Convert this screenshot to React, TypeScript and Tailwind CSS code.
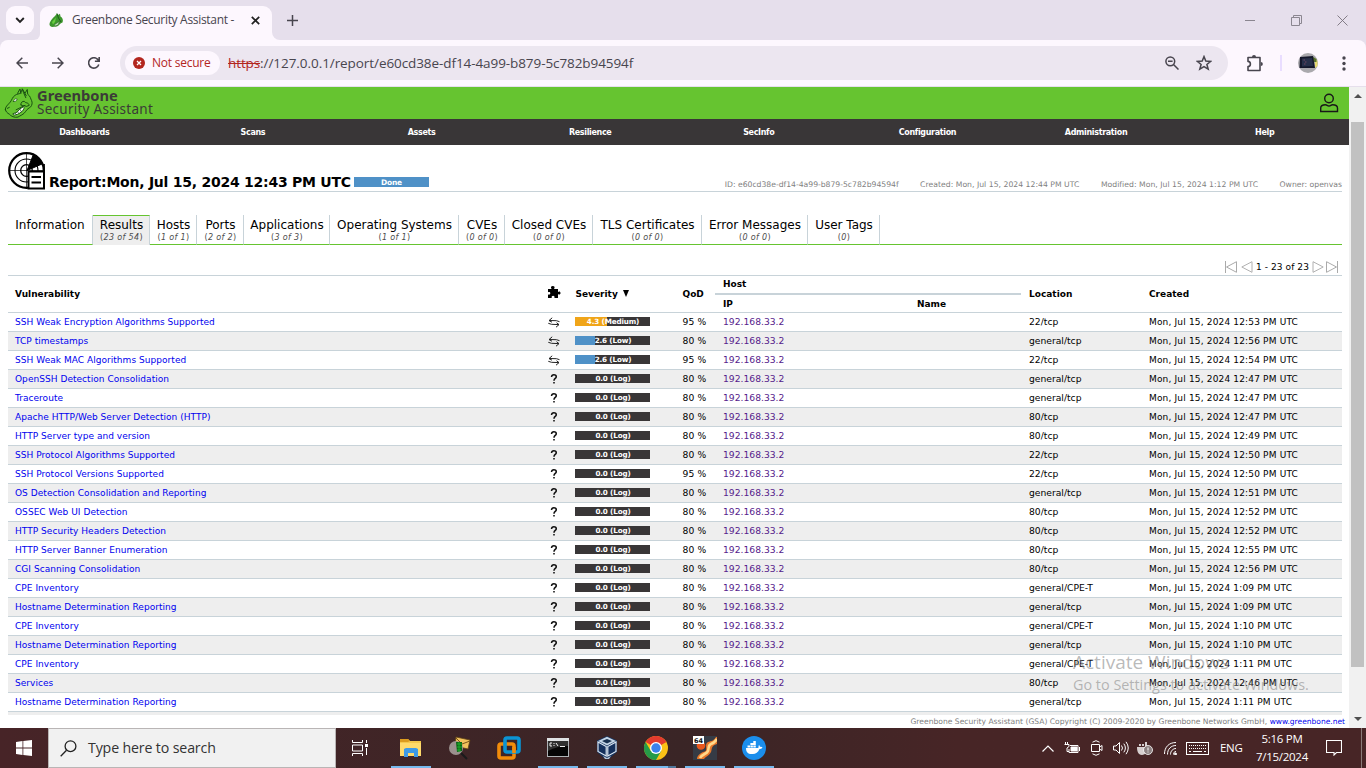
import type { ReactNode } from "react";

type Row = [name: string, score: string, qod: number, location: string, created: string];

const ROWS: Row[] = [
  ["SSH Weak Encryption Algorithms Supported", "4.3 (Medium)", 95, "22/tcp", "12:53"],
  ["TCP timestamps", "2.6 (Low)", 80, "general/tcp", "12:56"],
  ["SSH Weak MAC Algorithms Supported", "2.6 (Low)", 95, "22/tcp", "12:54"],
  ["OpenSSH Detection Consolidation", "0.0 (Log)", 80, "general/tcp", "12:47"],
  ["Traceroute", "0.0 (Log)", 80, "general/tcp", "12:47"],
  ["Apache HTTP/Web Server Detection (HTTP)", "0.0 (Log)", 80, "80/tcp", "12:47"],
  ["HTTP Server type and version", "0.0 (Log)", 80, "80/tcp", "12:49"],
  ["SSH Protocol Algorithms Supported", "0.0 (Log)", 80, "22/tcp", "12:50"],
  ["SSH Protocol Versions Supported", "0.0 (Log)", 95, "22/tcp", "12:50"],
  ["OS Detection Consolidation and Reporting", "0.0 (Log)", 80, "general/tcp", "12:51"],
  ["OSSEC Web UI Detection", "0.0 (Log)", 80, "80/tcp", "12:52"],
  ["HTTP Security Headers Detection", "0.0 (Log)", 80, "80/tcp", "12:52"],
  ["HTTP Server Banner Enumeration", "0.0 (Log)", 80, "80/tcp", "12:55"],
  ["CGI Scanning Consolidation", "0.0 (Log)", 80, "80/tcp", "12:56"],
  ["CPE Inventory", "0.0 (Log)", 80, "general/CPE-T", "1:09"],
  ["Hostname Determination Reporting", "0.0 (Log)", 80, "general/tcp", "1:09"],
  ["CPE Inventory", "0.0 (Log)", 80, "general/CPE-T", "1:10"],
  ["Hostname Determination Reporting", "0.0 (Log)", 80, "general/tcp", "1:10"],
  ["CPE Inventory", "0.0 (Log)", 80, "general/CPE-T", "1:11"],
  ["Services", "0.0 (Log)", 80, "80/tcp", "12:46"],
  ["Hostname Determination Reporting", "0.0 (Log)", 80, "general/tcp", "1:11"],
];

const MENU = ["Dashboards", "Scans", "Assets", "Resilience", "SecInfo", "Configuration", "Administration", "Help"];

const TABS: { label: string; count?: string; width: string }[] = [
  { label: "Information", width: "w-[85px]" },
  { label: "Results", count: "23 of 54", width: "w-[57px]" },
  { label: "Hosts", count: "1 of 1", width: "w-[47px]" },
  { label: "Ports", count: "2 of 2", width: "w-[47px]" },
  { label: "Applications", count: "3 of 3", width: "w-[86px]" },
  { label: "Operating Systems", count: "1 of 1", width: "w-[129px]" },
  { label: "CVEs", count: "0 of 0", width: "w-[46px]" },
  { label: "Closed CVEs", count: "0 of 0", width: "w-[88px]" },
  { label: "TLS Certificates", count: "0 of 0", width: "w-[109px]" },
  { label: "Error Messages", count: "0 of 0", width: "w-[106px]" },
  { label: "User Tags", count: "0", width: "w-[72px]" },
];

const COLUMNS = "grid grid-cols-[538px_29px_107.500px_40.500px_194px_112px_120px_1fr]";

function DragonHead({ className, face, line }: { className: string; face: string; line: string }) {
  return (
    <svg className={className} viewBox="0 0 30 32" fill="none" stroke={line} strokeWidth="1" strokeLinejoin="round" strokeLinecap="round">
      <path
        d="M1 22.500C.5 19.500 3.500 17.500 6 14.500C8 12 8 9.500 11 7.500C13 6.200 15 6 16.500 5.500L18.500 1L19.500 4.500L21.500 5L23.500 1.500L24 6.500C27 8.500 26.800 11 28 13C29 15 28.500 18 27 19.500C25 21 23.500 21.500 22 24C20 27.500 16 28.500 14 30C10.500 31 6.500 29 5 27C3 26 1.500 24.500 1 22.500Z"
        fill={face}
      />
      <path d="M17 5.500L16 1L13.500 5.500M20 5.500L22 10M18.500 1L22.500 8M17 17.500C16.500 15 18.500 13.500 20.500 13.800C21.500 16 25 14.500 25.500 18L22.500 19C20.500 17.500 19 19 17 17.500M3 21L5 20M12 22.500L21 18" />
      <path d="M9.500 14C9.500 11.800 11 10.800 13 11.300C13.300 12.800 11.500 14.300 9.500 14Z" fill="#fff" strokeWidth=".7" />
      <path d="M9 26.500L13 25L16 21.500L19.500 19.500L20.500 20.500L18.500 24L14 27L10 28Z" fill="#fff" strokeWidth=".9" />
      <path d="M11 26L12.500 27.500M13.500 24.500L15 26.500M16 22L17.500 24.500" strokeWidth=".7" />
    </svg>
  );
}

function Favicon() {
  return (
    <svg className="ml-[9px] h-[15px] w-[15px]" viewBox="0 0 15 15">
      <path d="M.5 11C1 8 4 4.500 6 3L8 .5L9 2L11 .8L11.500 3.500C13.500 4.500 14.500 7 13.500 9.500C11 10 10.500 12.500 8 13.500L3 14C1.500 13.500.3 12.500.5 11Z" fill="#3c962c" />
      <path d="M3 9L7 4.500L6 9L4 11.500Z" fill="#68cf3f" />
      <path d="M8 .5L9.500 5L12 9" fill="none" stroke="#205d1d" />
      <path d="M5 12L8 10L10.500 8.500L9 12L6 13Z" fill="#c5e6bb" stroke="#315d29" strokeWidth=".5" />
    </svg>
  );
}

function TabStrip() {
  return (
    <div className="flex h-[40px] w-full bg-[#e6dfec]">
      <div className="ml-[6px] mt-[6px] flex h-[28px] w-[28px] items-center justify-center rounded-[9px] bg-[#fdf7fe]">
        <svg className="h-[8px] w-[10px]" viewBox="0 0 10 8" fill="none" stroke="#222" strokeWidth="1.900"><path d="M1.200 2L5 5.800L8.800 2" /></svg>
      </div>
      <div className="flex h-[40px] w-[250px] items-end">
        <div className="h-[10px] w-[6px] bg-[#fdf7fe]"><div className="h-full w-full rounded-br-[6px] bg-[#e6dfec]" /></div>
        <div className="flex h-[34px] w-[232px] items-center rounded-t-[9px] bg-[#fdf7fe] pb-[6px]">
          <Favicon />
          <span className="ml-[8px] w-[179px] whitespace-pre font-['Open_Sans'] text-[12px] tracking-[-0.31px] text-[#48454e]">Greenbone Security Assistant -</span>
          <svg className="h-[9px] w-[9px]" viewBox="0 0 9 9" stroke="#222" strokeWidth="1.700"><path d="M.8.8L8.200 8.200M8.200.8L.8 8.200" /></svg>
        </div>
        <div className="h-[10px] w-[8px] bg-[#fdf7fe]"><div className="h-full w-full rounded-bl-[8px] bg-[#e6dfec]" /></div>
      </div>
      <svg className="ml-[2.500px] mt-[14.500px] h-[11px] w-[11px]" viewBox="0 0 11 11" stroke="#48454e" strokeWidth="1.500"><path d="M5.500 0V11M0 5.500H11" /></svg>
      <div className="flex-1" />
      <div className="mt-[15px] flex h-[11px] items-center pr-[18px]">
        <svg className="mr-[36px] h-[11px] w-[10px]" viewBox="0 0 10 11" stroke="#8b8690"><path d="M0 5.500H10" /></svg>
        <svg className="mr-[35px] h-[11px] w-[11px]" viewBox="0 0 11 11" fill="none" stroke="#8b8690"><path d="M.5 2.500H8.500V10.500H.5ZM2.500 2.500V.5H10.500V8.500H8.500" /></svg>
        <svg className="h-[11px] w-[11px]" viewBox="0 0 11 11" stroke="#77727c" strokeWidth=".9"><path d="M.5.5L10.500 10.500M10.500.5L.5 10.500" /></svg>
      </div>
    </div>
  );
}

function Toolbar() {
  return (
    <div className="h-[47px] w-full bg-[#e6dfec]">
      <div className="flex h-[46px] w-full items-center rounded-t-[8px] bg-[#fdf7fe]">
        <svg className="ml-[16px] h-[12px] w-[12px]" viewBox="0 0 12 12" fill="none" stroke="#48454e" strokeWidth="1.500"><path d="M12 6H1M6.300.7L1 6L6.300 11.300" /></svg>
        <svg className="ml-[24px] h-[12px] w-[12px]" viewBox="0 0 12 12" fill="none" stroke="#48454e" strokeWidth="1.500"><path d="M0 6H11M5.700.7L11 6L5.700 11.300" /></svg>
        <svg className="ml-[24px] h-[12px] w-[12px]" viewBox="0 0 12 12" fill="none" stroke="#48454e" strokeWidth="1.600"><path d="M10.800 7.500A5.200 5.200 0 1 1 9.700 2.400L11 4M11.200 0V4.300H6.900" /></svg>
        <div className="ml-[20px] flex h-[34px] w-[1108px] items-center rounded-full bg-[#ece6f0]">
          <div className="ml-[5px] flex h-[24px] w-[95px] items-center rounded-full bg-[#fdf7fe]">
            <svg className="ml-[8px] h-[12px] w-[12px]" viewBox="0 0 12 12"><circle cx="6" cy="6" r="6" fill="#b3261e" /><path d="M4 4L8 8M8 4L4 8" stroke="#fff" strokeWidth="1.300" /></svg>
            <span className="ml-[7px] whitespace-nowrap font-['Open_Sans'] text-[12px] tracking-[-0.236px] text-[#b3261e]">Not secure</span>
          </div>
          <div className="ml-[8px] flex w-[937px] whitespace-nowrap font-['Open_Sans'] text-[13.500px] leading-[20px]">
            <span className="w-[32px] tracking-[-0.1px] text-[#b3261e] line-through">https</span>
            <span className="w-[118px] tracking-[-0.05px] text-[#48454e]">://127.0.0.1<span className="tracking-[-0.08px]">/report/e60cd38e-df14-4a99-b879-5c782b94594f</span></span>
          </div>
          <svg className="h-[14px] w-[14px]" viewBox="0 0 14 14" fill="none" stroke="#48454e" strokeWidth="1.500"><circle cx="5.300" cy="5.300" r="4.400" /><path d="M8.500 8.500L13.500 13.500M3 5.300H7.600" /></svg>
          <svg className="ml-[17px] h-[16px] w-[16px]" viewBox="0 0 16 16" fill="none" stroke="#48454e" strokeWidth="1.500"><path d="M8 1.600L9.800 6.100L14.700 6.400L10.900 9.500L12.200 14.200L8 11.600L3.800 14.200L5.100 9.500L1.300 6.400L6.200 6.100Z" /></svg>
        </div>
        <svg className="ml-[18px] h-[17px] w-[18px]" viewBox="0 0 18 17" fill="none" stroke="#48454e" strokeWidth="1.600"><path d="M2 2.500H14V15.500H2V11.600C5.200 11.500 5.200 6.500 2 6.400Z" strokeLinejoin="round" /><path d="M6 2A2 2 0 0 1 10 2ZM14.800 6.900A2 2 0 0 1 14.800 11Z" fill="#48454e" stroke="none" /></svg>
        <div className="ml-[16px] h-[16px] w-[2px] bg-[#e9ddff]" />
        <svg className="ml-[16px] h-[20px] w-[20px]" viewBox="0 0 20 20"><circle cx="10" cy="10" r="10" fill="#aaa9ad" /><path d="M17 5L19.500 8V13L17 15Z" fill="#e8dc70" /><path d="M15 4L18.500 6V9H15Z" fill="#56702d" /><path d="M2 4L15 3L17 15L1.500 15Z" fill="#15182b" /><path d="M4 5.500L14 5L15 13L4 13.500Z" fill="#27304a" /><path d="M5.500 7H7M7 9H8.500M6 11H7.500" stroke="#95506b" strokeWidth=".7" /></svg>
        <svg className="ml-[24px] h-[15px] w-[4px]" viewBox="0 0 4 15" fill="#48454e"><circle cx="2" cy="2" r="1.700" /><circle cx="2" cy="7.500" r="1.700" /><circle cx="2" cy="13" r="1.700" /></svg>
      </div>
    </div>
  );
}

function AppHeader() {
  return (
    <>
      <header className="flex h-[32px] justify-between bg-[#66c430]">
        <div className="flex">
          <DragonHead className="ml-[4px] mt-px h-[31px] w-[30px]" face="#66c430" line="#174c12" />
          <div className="ml-[3px] flex flex-col whitespace-nowrap text-[#3b3b37]">
            <span className="h-[15px] font-['Noto_Sans'] text-[14.700px] font-bold leading-[17px]">Greenbone</span>
            <span className="h-[16px] font-['Noto_Sans'] text-[13.500px] leading-[14px] tracking-[0.26px]">Security Assistant</span>
          </div>
        </div>
        <svg className="mr-[10px] mt-[6px] h-[20px] w-[20px]" viewBox="0 0 20 20" fill="none" stroke="#181818" strokeWidth="1.400"><circle cx="10" cy="5.500" r="4.300" /><path d="M1.700 18.500V15C1.700 12.500 3.500 11.700 6.500 11.700C8 11.700 8.300 13 10 13S12 11.700 13.500 11.700C16.500 11.700 18.500 12.500 18.500 15V18.500Z" /></svg>
      </header>
      <nav className="grid h-[26px] grid-cols-8 bg-[#393637]">
        {MENU.map((m) => (
          <span key={m} className="text-center text-[8px] font-bold leading-[28px] tracking-[-0.33px] text-white">{m}</span>
        ))}
      </nav>
    </>
  );
}

function ReportHeading() {
  return (
    <div className="flex h-[47px] items-end border-b border-[#c8d3d9]">
      <svg className="mb-[1px] h-[38px] w-[38px]" viewBox="0 0 38 38" fill="none" stroke="#000">
        <circle cx="18.500" cy="18.500" r="17.300" strokeWidth="2.200" />
        <circle cx="18.500" cy="18.500" r="11.500" strokeWidth="1.100" />
        <circle cx="18.500" cy="18.500" r="5.800" strokeWidth="1.300" />
        <path d="M18.500 1V37M1 18.500H37" strokeWidth=".7" />
        <path d="M19 18.500L25.500 2.300C30 4.500 33 8.500 34 12Z" fill="#000" />
        <path d="M36 12V20" strokeWidth="1.800" />
        <path d="M20.500 19.500H36V36.500H20.500Z" fill="#fff" strokeWidth="2" />
        <path d="M23.500 25H33M23.500 30.500H33" strokeWidth="1.800" />
      </svg>
      <span className="ml-[3px] h-[19px] w-[305px] whitespace-nowrap text-[14px] font-bold leading-[20px] tracking-[-0.245px] text-black">Report:Mon, Jul 15, 2024 12:43 PM UTC</span>
      <span className="mb-[4px] h-[10px] w-[75px] bg-[#4f91c7] text-center text-[7.500px] font-bold leading-[11.500px] tracking-[-0.2px] text-white">Done</span>
      <div className="ml-auto flex gap-[21.500px] whitespace-nowrap text-[7.700px] leading-[12px] text-[#7f7f7f]">
        <span className="tracking-[-0.02px]">ID: e60cd38e-df14-4a99-b879-5c782b94594f</span>
        <span className="tracking-[0.02px]">Created: Mon, Jul 15, 2024 12:44 PM UTC</span>
        <span className="tracking-[0.03px]">Modified: Mon, Jul 15, 2024 1:12 PM UTC</span>
        <span>Owner: openvas</span>
      </div>
    </div>
  );
}

function Tabs() {
  return (
    <div className="mt-[23px] flex h-[30px] text-black">
      {TABS.map((t, i) => (
        <div
          key={t.label}
          className={`flex shrink-0 flex-col items-center whitespace-nowrap border-r border-r-[#c8d3d9] ${t.width} ${
            i === 1 ? "border-t border-t-[#66c430] bg-[#eeeeee] pt-px" : "border-b border-b-[#66c430] pt-[2px]"
          } ${i === 0 ? "" : "pl-px"}`}
        >
          <span className="text-[12px] leading-[16px]">{t.label}</span>
          {t.count && (
            <span className="text-[8px] leading-[9px] tracking-[0.36px] text-[#4c4c4c]">(<i>{t.count}</i>)</span>
          )}
        </div>
      ))}
      <div className="flex-1 border-b border-[#66c430]" />
    </div>
  );
}

function Pager() {
  const icon = "h-[12px] w-[12px]";
  return (
    <div className="flex h-[30px] items-center justify-end pr-[4px] pt-[14px] text-black">
      <svg className={icon} viewBox="0 0 12 12" fill="none" stroke="#aaa"><path d="M.5 0V12M11.500.7V11.300L1.500 6Z" /></svg>
      <svg className={`ml-[4px] ${icon}`} viewBox="0 0 12 12" fill="none" stroke="#b0b0b0"><path d="M11 .7V11.300L.8 6Z" /></svg>
      <span className="ml-[3px] w-[56px] whitespace-nowrap text-[9px] leading-[12px] tracking-[0.08px]">1 - 23 of 23</span>
      <svg className={icon} viewBox="0 0 12 12" fill="none" stroke="#b0b0b0"><path d="M1 .7V11.300L11.200 6Z" /></svg>
      <svg className={`ml-[2px] ${icon}`} viewBox="0 0 12 12" fill="none" stroke="#aaa"><path d="M11.500 0V12M.5.7V11.300L10.500 6Z" /></svg>
    </div>
  );
}

function SeverityBar({ score }: { score: string }) {
  const value = parseFloat(score);
  const fill = value > 4 ? "bg-[#f0a519]" : "bg-[#4f91c7]";
  return (
    <div className="relative mt-[4px] h-[9px] w-[75px] bg-[#393637]">
      <div className={`h-full ${fill}`} style={{ width: `${value * 10}%` }} />
      <span className="absolute inset-0 whitespace-nowrap pl-px text-center text-[7.200px] font-bold leading-[9.500px] tracking-[-0.14px] text-white">{score}</span>
    </div>
  );
}

function Solution({ unknown }: { unknown: boolean }) {
  return unknown ? (
    <svg className="ml-[3px] mt-[4px] h-[10px] w-[10px]" viewBox="0 0 10 11" fill="none" stroke="#111" strokeWidth="1.700"><path d="M2.300 3.400C2.300 1.500 3.300.9 4.800.9S7.500 1.700 7.500 3C7.500 4.900 5 4.800 5 7.300M5 8.700V10.500" /></svg>
  ) : (
    <svg className="ml-[2px] mt-[4px] h-[11px] w-[12px]" viewBox="0 0 12 11" fill="none" stroke="#222" strokeWidth="1"><path d="M4.200.8L1 3.600L4 5.200M1 3.500L8.500 3.700L11.500 4.700M8 10.200L11 7.600L8.500 5.700M11 7.600L3.500 7.300L.3 6.300" /></svg>
  );
}

function Cell({ children, className = "" }: { children?: ReactNode; className?: string }) {
  return <span className={`whitespace-nowrap leading-[18px] ${className}`}>{children}</span>;
}

function TableHead() {
  return (
    <div className={`${COLUMNS} h-[37px] shrink-0 border-t border-[#c8d3d9] text-[9px] font-bold text-black`}>
      <span className="pl-[7px] leading-[36px]">Vulnerability</span>
      <svg className="ml-[1px] mt-[9px] h-[14px] w-[14px]" viewBox="0 0 14 14" fill="#000"><path d="M1 4H4.600C3.300 2.200 4.200 1 5.800 1S8.300 2.200 7 4H11V7C12.300 6 13.500 6.500 13.500 8S12.300 10 11 9V13H7.400C8 11.500 7 10.800 6.100 10.800S4.200 11.500 4.800 13H1V9.500C2.500 10 3.300 9.300 3.300 8.300S2.500 6.700 1 7.200Z" /></svg>
      <span className="flex gap-[5px] pl-[0.500px] leading-[36px]"><span>Severity</span><svg className="mt-[14px] h-[7px] w-[6px]" viewBox="0 0 6 7"><path d="M0 0H6L3 7Z" /></svg></span>
      <span className="leading-[36px]">QoD</span>
      <div className="col-span-2 mr-[8px]">
        <div className="-ml-[8px] h-[19px] border-b-2 border-[#c8d3d9] pl-[8px] leading-[17px]">Host</div>
        <div className="flex leading-[18px]"><span className="w-[194px]">IP</span><span>Name</span></div>
      </div>
      <span className="leading-[36px]">Location</span>
      <span className="leading-[36px]">Created</span>
    </div>
  );
}

function ResultsTable() {
  return (
    <div className="h-[440px] overflow-hidden">
      <div className="flex flex-col">
        <TableHead />
        {ROWS.map(([name, score, qod, location, time], i) => (
          <div key={i} className={`${COLUMNS} h-[19px] border-t border-[#c8d3d9] text-[9.200px] text-black ${i % 2 ? "bg-[#eeeeee]" : "bg-white"}`}>
            <Cell className="pl-[7px] text-[9px] tracking-[0.04px] text-[#0000ee]">{name}</Cell>
            <Solution unknown={score.startsWith("0")} />
            <SeverityBar score={score} />
            <Cell className="tracking-[0.15px]">{qod} %</Cell>
            <Cell className="text-[#551a8b]">192.168.33.2</Cell>
            <Cell />
            <Cell>{location}</Cell>
            <Cell className="text-[9px] tracking-[0.165px]">Mon, Jul 15, 2024 {time} PM UTC</Cell>
          </div>
        ))}
        <div className="h-[19px] border-t border-[#c8d3d9] bg-[#eeeeee]" />
      </div>
    </div>
  );
}

function Page() {
  return (
    <div className="flex h-[641px] w-[1349px] flex-col bg-white">
      <AppHeader />
      <main className="flex flex-col pl-[8px] pr-[7px]">
        <ReportHeading />
        <Tabs />
        <Pager />
        <ResultsTable />
      </main>
      <footer className="flex h-[13px] justify-end gap-[2.500px] whitespace-nowrap pr-[4px] text-[7.600px] leading-[14px] text-[#7f7f7f]">
        <span>Greenbone Security Assistant (GSA) Copyright (C) 2009-2020 by Greenbone Networks GmbH,</span>
        <span className="text-[7.530px] text-[#0000ee]">www.greenbone.net</span>
      </footer>
    </div>
  );
}

function Scrollbar() {
  return (
    <div className="flex w-[17px] flex-col items-center bg-[#f1f1f1]">
      <svg className="mt-[7px] h-[4px] w-[8px]" viewBox="0 0 8 4" fill="#505050"><path d="M0 4L4 0L8 4Z" /></svg>
      <div className="mt-[24px] h-[545px] w-[13px] bg-[#c1c1c1]" />
      <svg className="mt-[50px] h-[4px] w-[8px]" viewBox="0 0 8 4" fill="#505050"><path d="M0 0L4 4L8 0Z" /></svg>
    </div>
  );
}

const APPS: { name: string; underline: string; art: ReactNode }[] = [
  {
    name: "explorer", underline: "w-[40px]",
    art: <><path d="M1 3H9L11 5H22V20H1Z" fill="#f5c84c" /><path d="M1 3H9L11 5L9 6H1Z" fill="#dc9c1e" /><path d="M1 7H22V20H1Z" fill="#ffda6b" /><path d="M5 13L7 12H17L19 13V21H15V17H9V21H5Z" fill="#3e9ae6" /></>,
  },
  {
    name: "mail finder", underline: "w-0",
    art: <><path d="M8 1L22 4L20 13L7 10Z" fill="#f2c25c" stroke="#5d4215" strokeWidth=".8" /><path d="M8 2L14 8L22 5" fill="none" stroke="#7a5619" /><circle cx="8" cy="12" r="7" fill="#9b918e" /><path d="M8 6H14V15L9 16Z" fill="#0b6414" /><path d="M9 8H14M9 11H14M9 14H13M11 6V16" stroke="#20c431" strokeWidth=".7" /><path d="M13 17L19 23" stroke="#191b1c" strokeWidth="2" /></>,
  },
  {
    name: "vmware", underline: "w-0",
    art: <g fill="none" strokeWidth="3.600"><rect x="2" y="8" width="15" height="14" rx="2" stroke="#f28c0a" /><rect x="8" y="2" width="14" height="14" rx="2" stroke="#0b94d4" /><path d="M17 11V17" stroke="#f28c0a" /></g>,
  },
  {
    name: "terminal", underline: "w-[40px]",
    art: <><rect x="1" y="2" width="22" height="19" fill="#aeb3b6" /><rect x="1" y="2" width="22" height="3" fill="#dfe2e4" /><rect x="2" y="5" width="20" height="15" fill="#050505" /><path d="M2 5H22V10Q11 10 2 15Z" fill="#303030" /><path d="M6 7H4V10H6M8 7V8M8 9V10M10 7L12 10M14 10.500H19" fill="none" stroke="#eee" /></>,
  },
  {
    name: "virtualbox", underline: "w-[40px]",
    art: <><path d="M12 0L22 4.500V16L15 22L12 23.500L9 22L2 16V4.500Z" fill="#17345f" /><path d="M12 .8L21 5L12 9.500L3 5Z" fill="#c3d4e5" /><path d="M12 3L17 5L12 7.600L7 5Z" fill="#17304f" /><path d="M3 6V15.500L11.200 20V10.500ZM21 6V15.500L12.800 20V10.500Z" fill="#14305c" stroke="#dce7f2" strokeWidth="1.200" /><path d="M8 20L12 22L16 20L14 23H10Z" fill="#b4c5d8" /></>,
  },
  {
    name: "chrome", underline: "w-[40px]",
    art: <><circle cx="12" cy="12" r="12" fill="#fbc116" /><path d="M12 12L1.600 6A12 12 0 0 1 22.400 6Z" fill="#e33b2e" /><path d="M1.600 6A12 12 0 0 0 12 24L17.200 15L12 12L6.800 15Z" fill="#269b48" /><circle cx="12" cy="12" r="6" fill="#fff" /><circle cx="12" cy="12" r="4.700" fill="#3b82ed" /></>,
  },
  {
    name: "putty", underline: "w-[40px]",
    art: <><rect width="24" height="24" fill="#353b45" /><path d="M4 23C4 19 9 16 12 15.500C15 14 11 8 15 6C18 5 21 5 23 1H24V8C20 9 19 11 18.500 14C18 19 13 20 11 23Z" fill="#e8782a" /><path d="M7 22C9 18 14 18 15 15S15 9 18 8S22 6 24 3" fill="none" stroke="#ffd98a" strokeWidth="2.600" /><circle cx="8" cy="9.500" r="4.300" fill="#e8581d" /><rect width="11" height="8" fill="#fff" /><text x="1" y="6.700" fontSize="6.500" fontWeight="700" fill="#111">64</text></>,
  },
  {
    name: "docker", underline: "w-[40px]",
    art: <><circle cx="12" cy="12" r="12" fill="#1b8eec" /><path d="M4 12H16C17 12 16 10 17 9C18 10 18 11 18 11C19 10.500 20 11 20.500 11.500C20 13 18 13 17.500 13C16 17 13 18.500 9.500 18C6 18 4 16 4 12Z" fill="#fff" /><path d="M5.500 9.500H8V11.500H5.500ZM8.400 9.500H10.900V11.500H8.400ZM11.300 9.500H13.800V11.500H11.300ZM8.400 7H13.800V9H8.400ZM11.300 5H13.800V7H11.300Z" fill="#fff" /></>,
  },
];

function Tray() {
  return (
    <div className="flex items-center text-white">
      <svg className="h-[7px] w-[12px]" viewBox="0 0 12 7" fill="none" stroke="#fff" strokeWidth="1.200"><path d="M.5 6.500L6 1L11.500 6.500" /></svg>
      <svg className="ml-[10px] h-[12px] w-[16px]" viewBox="0 0 16 12" fill="none" stroke="#fff"><path d="M1.500 0V2M3.500 0V2M.5 2.500H5V4.500L3 6V9.500H5M6 3.500H14V10.500H5V7M15.500 5V9" /><path d="M7 5H13V9H7Z" fill="#fff" /></svg>
      <svg className="ml-[11px] h-[16px] w-[12px]" viewBox="0 0 12 16" fill="none" stroke="#fff"><path d="M1.500 2.200Q5-.8 8.500 2.200M1.500 13.800Q5 16.800 8.500 13.800M.5 4.500H8.500V11.500H.5ZM8.500 7L11 5.500V10.500L8.500 9" /></svg>
      <svg className="ml-[10px] h-[14px] w-[16px]" viewBox="0 0 16 14" fill="none" stroke="#fff"><path d="M.5 5H3L6.500 1.500V12.500L3 9H.5ZM8.500 4.500Q10.500 7 8.500 9.500M10.800 2.700Q14 7 10.800 11.300M13 .8Q17.500 7 13 13.200" /></svg>
      <svg className="ml-[8px] h-[15px] w-[16px]" viewBox="0 0 16 15" fill="#d6cfcf"><path d="M0 6H11C13 10 8 14 5 14C1 14 0 10 0 6ZM2 3H4V5H2ZM5 3H7V5H5ZM8 1H10V5H8Z" /><circle cx="11" cy="9" r="4.500" fill="#8d8282" stroke="#fff" strokeWidth=".8" /><path d="M11 6.500V9.500M11 10.500V11.500" stroke="#fff" /></svg>
      <svg className="ml-[11px] h-[13px] w-[13px]" viewBox="0 0 13 13" fill="none" stroke="#fff"><path d="M.5 12C.5 5 5 .5 12 .5M3.500 12.500C3.500 7 7 3.500 12 3.500M6.500 12.500C6.500 9 9 6.500 12 6.500M9.500 12.500C9.500 10.500 10.500 9.500 12 9.500" /><circle cx="11.500" cy="12" r="1" fill="#fff" /></svg>
      <svg className="ml-[9px] h-[13px] w-[23px]" viewBox="0 0 23 13" fill="none" stroke="#fff"><rect x=".5" y=".5" width="22" height="12" /><path d="M3 3.500H20M3 6.500H20" strokeDasharray="1 1" /><path d="M3 9.500H5M7 9.500H16M18 9.500H20" /></svg>
      <span className="ml-[11px] w-[23px] font-['Open_Sans'] text-[11.500px] tracking-[-0.3px]">ENG</span>
      <div className="ml-[7px] flex w-[64px] flex-col items-center font-['Open_Sans'] text-[11.500px] leading-[18px] tracking-[-0.28px]"><span>5:16 PM</span><span>7/15/2024</span></div>
      <svg className="ml-[12px] mr-[19px] h-[16px] w-[16px]" viewBox="0 0 16 16" fill="none" stroke="#fff" strokeWidth="1.100"><path d="M.5.5H15.500V12.500H10.500L8 15V12.500H.5Z" /></svg>
      <div className="mr-[4px] h-[40px] w-px bg-[#8a7a78]" />
    </div>
  );
}

function Taskbar() {
  return (
    <div className="flex h-[40px] w-full bg-linear-to-r from-[#472427] from-0% via-[#3a2526] via-50% to-[#472526] to-70%">
      <div className="flex w-[48px] items-center justify-center">
        <svg className="h-[16px] w-[16px]" viewBox="0 0 16 16" fill="#fff"><path d="M0 2L6.500 1.100V7.500H0ZM7.300 1L16 0V7.500H7.300ZM0 8.400H6.500V14.900L0 14ZM7.300 8.400H16V16L7.300 15Z" /></svg>
      </div>
      <div className="flex w-[288px] items-center border border-[#b9b5b5] bg-[#f1f1f1]">
        <svg className="ml-[11px] h-[17px] w-[17px]" viewBox="0 0 17 17" fill="none" stroke="#222" strokeWidth="1.300"><circle cx="10.500" cy="6.200" r="5.400" /><path d="M6.500 10.200L.7 16.200" /></svg>
        <span className="ml-[11px] font-['Open_Sans'] text-[14.200px] tracking-[-0.15px] text-[#333]">Type here to search</span>
      </div>
      <div className="flex w-[48px] items-center justify-center">
        <svg className="h-[16px] w-[16px]" viewBox="0 0 16 16" fill="none" stroke="#fff"><path d="M.5 0V2.500H10.500V0M.5 16V13.500H10.500V16M.5 5H10.500V11H.5ZM14.500 0V3M14.500 8V15" /><path d="M13 4H16V7H13Z" fill="#fff" stroke="none" /></svg>
      </div>
      <div className="ml-[2px] flex">
        {APPS.map((a) => (
          <div key={a.name} className="flex w-[49px] flex-col items-center">
            <svg className="mt-[8px] h-[24px] w-[24px]" viewBox="0 0 24 24">{a.art}</svg>
            <div className={`mt-[6px] flex h-[2px] justify-end bg-[#76b9ed] ${a.underline}`}>
              {a.name === "chrome" && <div className="h-[2px] w-[8px] bg-[#50779b]" />}
            </div>
          </div>
        ))}
      </div>
      <div className="flex-1" />
      <Tray />
    </div>
  );
}

export default function App() {
  return (
    <div className="relative flex h-[768px] w-[1366px] flex-col overflow-hidden bg-white font-['DejaVu_Sans',sans-serif]">
      <TabStrip />
      <Toolbar />
      <div className="flex h-[641px]">
        <Page />
        <Scrollbar />
      </div>
      <Taskbar />
      <div className="pointer-events-none absolute left-[1073px] top-[650px] whitespace-nowrap font-['Open_Sans'] text-[#808080]/55">
        <div className="text-[19px] leading-[25px]">Activate Windows</div>
        <div className="text-[14.400px] leading-[20px]">Go to Settings to activate Windows.</div>
      </div>
    </div>
  );
}
